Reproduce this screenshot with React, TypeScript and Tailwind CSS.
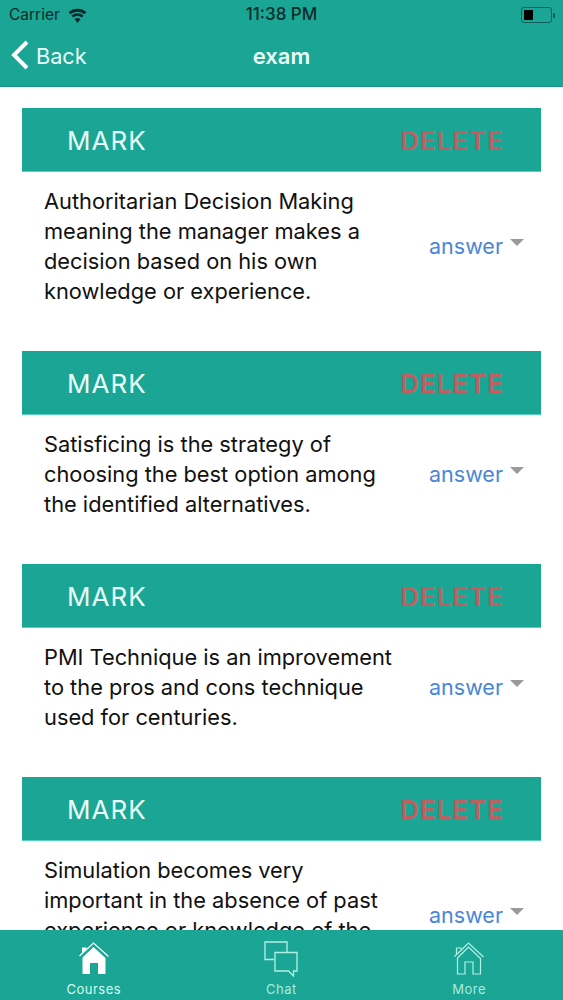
const questions = [
  { id: 1, text: ["Authoritarian Decision Making", "meaning the manager makes a", "decision based on his own", "knowledge or experience."] },
  { id: 2, text: ["Satisficing is the strategy of", "choosing the best option among", "the identified alternatives."] },
  { id: 3, text: ["PMI Technique is an improvement", "to the pros and cons technique", "used for centuries."] },
  { id: 4, text: ["Simulation becomes very", "important in the absence of past", "experience or knowledge of the", "problem at hand."] },
];

function HomeIcon({ filled }: { filled?: boolean }) {
  return (
    <svg width="30" height="33" viewBox="0 0 30 33" fill="none" stroke={filled ? "#fff" : "#b5f0e6"} strokeWidth="1.2">
      {filled ? (
        <>
          <path d="M0.5 14 L14.5 1 L29.5 14.5" />
          <path d="M3 11 V5.5 H7.5 V7" fill="#fff" stroke="none" />
          <path d="M3.5 15.5 L14.5 5 L26.5 16 V32 H19 V21 H11 V32 H3.5 Z" fill="#fff" stroke="none" />
        </>
      ) : (
        <>
          <path d="M0.5 14.5 L14.5 1 L29.5 15" />
          <path d="M2.5 12 V6 H7 V7" />
          <path d="M3.5 16 L14.5 5 L26.5 16.5 V32 H19 V20 H11 V32 H3.5 Z" />
        </>
      )}
    </svg>
  );
}

function ChatIcon() {
  return (
    <svg width="34" height="36" viewBox="0 0 34 36" fill="none" stroke="#b5f0e6" strokeWidth="1.3">
      <path d="M10 18.5 H1 V1 H23 V11" />
      <path d="M11 11.5 H33 V30 H29.5 V35 L24.5 30 H11 Z" />
    </svg>
  );
}

export default function App() {
  return (
    <div className="relative flex h-[1000px] w-full flex-col overflow-hidden bg-white font-['Inter','Noto_Sans',sans-serif]">
      <header className="h-[87px] shrink-0 border-b border-[#17948a] bg-[#1aa595]">
        <div className="relative flex h-[30px] items-center pl-[9px] text-[15.5px] text-[#0c2b2a]">
          <span>Carrier</span>
          <svg className="ml-[8px]" width="19" height="15" viewBox="0 0 18 14" fill="#0c2b2a">
            <path d="M9 14 L6.2 10.6 A4.4 4.4 0 0 1 11.8 10.6 Z" />
            <path d="M4.9 9 L3.2 7 A9 9 0 0 1 14.8 7 L13.1 9 A6.4 6.4 0 0 0 4.9 9 Z" />
            <path d="M2.3 5.9 L0.5 3.8 A13 13 0 0 1 17.5 3.8 L15.7 5.9 A10.4 10.4 0 0 0 2.3 5.9 Z" />
          </svg>
          <span className="absolute left-0 right-0 text-center text-[17px] font-medium">11:38 PM</span>
          <div className="ml-auto flex items-center pr-[8px]">
            <div className="h-[16px] w-[31px] rounded-[3px] border border-[#0c5f5a] p-[2px]">
              <div className="h-full w-[9px] bg-black" />
            </div>
            <div className="ml-[1px] h-[5px] w-[2px] bg-[#0c5f5a]" />
          </div>
        </div>
        <div className="relative flex h-[52px] items-center text-[#e9fdf8]">
          <svg className="ml-[11px] mr-[7px] -mt-[3px]" width="18" height="30" viewBox="0 0 18 30" fill="none" stroke="#fff" strokeWidth="4">
            <path d="M16 2 L3 15 L16 28" />
          </svg>
          <span className="text-[21.7px]">Back</span>
          <span className="absolute left-0 right-0 text-center text-[22px] font-semibold">exam</span>
        </div>
      </header>

      <main className="flex-1 overflow-hidden px-[22px] pt-[21px]">
        {questions.map((q) => (
          <section key={q.id}>
            <div className="flex h-[64px] items-center justify-between border-b border-[#54cfc3] bg-[#1aa595] pl-[45px] pr-[37px] pt-[1px] text-[26px] tracking-[1px]">
              <span className="text-[#eafdf8]">MARK</span>
              <span className="font-semibold text-[#bf5f60]">DELETE</span>
            </div>
            <div className="flex items-center justify-between pb-[45px] pl-[22px] pr-[17px] pt-[14px]">
              <p className="text-[21.8px] leading-[30px] text-[#111111]">
                {q.text.map((line) => (
                  <span key={line} className="block whitespace-nowrap">{line}</span>
                ))}
              </p>
              <div className="flex items-center gap-[7px]">
                <span className="text-[21.5px] text-[#4a86d8]">answer</span>
                <span className="mb-[8px] h-0 w-0 border-x-[7px] border-t-[7px] border-x-transparent border-t-[#9a9a9a]" />
              </div>
            </div>
          </section>
        ))}
      </main>

      <nav className="absolute bottom-0 left-0 right-0 grid h-[70px] grid-cols-3 bg-[#1aa595] text-[13px] tracking-[0.5px]">
        <div className="flex flex-col items-center pt-[12px] text-[#d8fbf3]">
          <HomeIcon filled />
          <span className="mt-[5px]">Courses</span>
        </div>
        <div className="flex flex-col items-center pt-[11px] text-[#a9ebdf]">
          <ChatIcon />
          <span className="mt-[3px]">Chat</span>
        </div>
        <div className="flex flex-col items-center pt-[12px] text-[#a9ebdf]">
          <HomeIcon />
          <span className="mt-[5px]">More</span>
        </div>
      </nav>
    </div>
  );
}
